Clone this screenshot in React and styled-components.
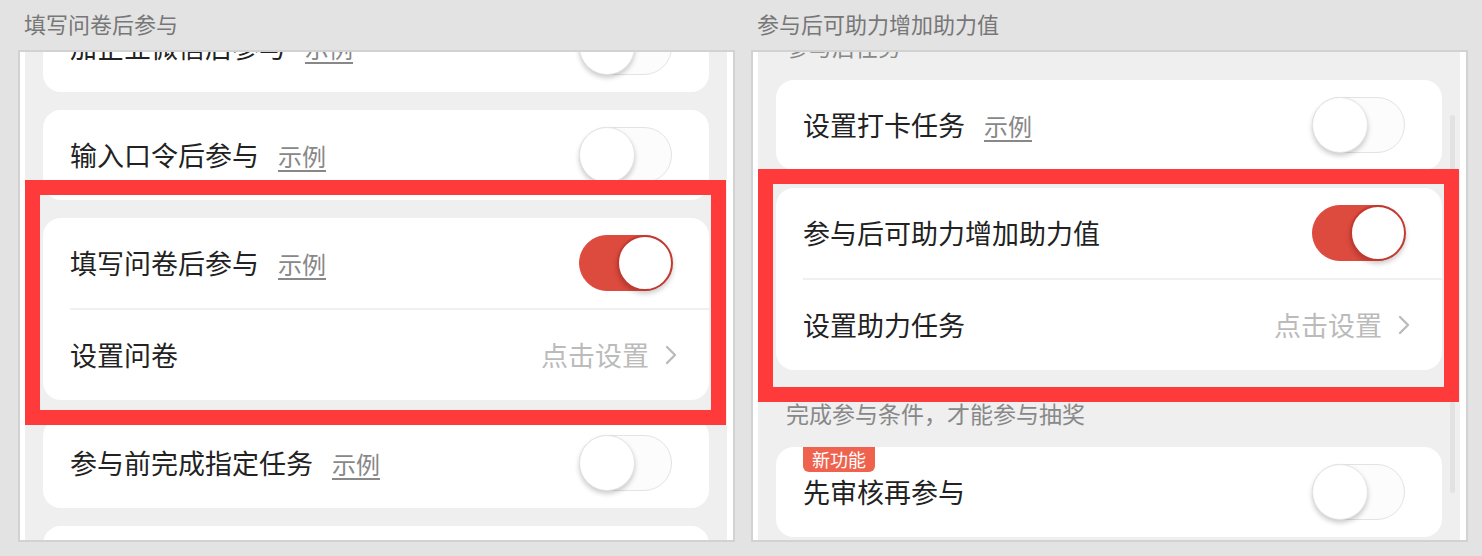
import React from 'react';
import styled, {createGlobalStyle} from "styled-components";

const GlobalStyle = createGlobalStyle`
  html, body {
    margin: 0;
    padding: 0;
    background: #e3e3e3;
    font-family: "Noto Sans CJK SC", "Noto Sans", sans-serif;
  }
`;

const Page = styled.div`
  display: grid;
  grid-template-columns: 717px 717px;
  column-gap: 16px;
  padding: 0 14px 0 18px;
  height: 556px;
  box-sizing: border-box;
  background: #e3e3e3;
`;

const Column = styled.section`
  display: flex;
  flex-direction: column;
`;

const Caption = styled.h2`
  margin: 0;
  height: 50px;
  padding-left: 6px;
  font-size: 22px;
  line-height: 46px;
  font-weight: 400;
  color: #777;
`;

const Phone = styled.div`
  height: 492px;
  box-sizing: border-box;
  border: 2px solid #d2d2d2;
  background: #fff;
  padding: 0 6px 0 5px;
`;

const Viewport = styled.div`
  position: relative;
  height: 100%;
  overflow: hidden;
  background: #efefef;
`;

const Content = styled.div`
  margin-top: ${p => p.$scroll}px;
  padding: 0 18px;
  display: flex;
  flex-direction: column;
`;

const Card = styled.div`
  position: relative;
  flex-shrink: 0;
  margin-top: ${p => p.$space || 0}px;
  background: #fff;
  border-radius: 18px;
`;

const Row = styled.div`
  height: 90px;
  box-sizing: border-box;
  display: flex;
  align-items: center;
  justify-content: space-between;
  padding: 0 ${p => (p.$link ? 31 : 37)}px 0 27px;
`;

const Divider = styled.div`
  height: 2px;
  margin-left: 27px;
  background: #f0f0f0;
`;

const Label = styled.div`
  display: flex;
  align-items: baseline;
  font-size: 27px;
  line-height: 36px;
  color: #222;
`;

const Example = styled.span`
  margin-left: 19px;
  font-size: 24px;
  color: #888;
  text-decoration: underline;
  text-underline-offset: 4px;
  text-decoration-thickness: 2px;
`;

const Action = styled.div`
  display: flex;
  align-items: center;
  gap: 16px;
  font-size: 27px;
  line-height: 36px;
  color: #bbb;
`;

const Switch = styled.span`
  position: relative;
  flex-shrink: 0;
  width: 93px;
  height: 56px;
  box-sizing: border-box;
  border-radius: 28px;
  background: ${p => (p.$on ? '#dd4a3e' : '#fcfcfc')};
  border: 1.5px solid ${p => (p.$on ? '#dd4a3e' : '#e3e3e3')};

  &::after {
    content: '';
    position: absolute;
    top: -1.5px;
    ${p => (p.$on ? 'right: -1.5px;' : 'left: -1.5px;')}
    width: 56px;
    height: 56px;
    box-sizing: border-box;
    border-radius: 50%;
    background: #fff;
    border: ${p => (p.$on ? '2px solid #c23a2f' : '1px solid #e4e4e4')};
    box-shadow: 0 3px 5px rgba(0, 0, 0, 0.2);
  }
`;

const Section = styled.div`
  flex-shrink: 0;
  padding: 28px 0 19px 10px;
  font-size: 23px;
  line-height: 30px;
  color: #888;
`;

const Badge = styled.span`
  position: absolute;
  top: 0;
  left: 27px;
  height: 25px;
  padding: 0 9px;
  border-radius: 0 0 6px 6px;
  background: #ef634e;
  color: #fff;
  font-size: 18px;
  line-height: 25px;
`;

const Highlight = styled.div`
  position: absolute;
  left: 0;
  top: ${p => p.$top}px;
  width: 701px;
  height: ${p => p.$height}px;
  box-sizing: border-box;
  border: 15px solid #ff3a3a;
  pointer-events: none;
`;

const Scrollbar = styled.div`
  position: absolute;
  right: 5px;
  top: 63px;
  width: 5px;
  height: 378px;
  border-radius: 3px;
  background: #e2e2e2;
`;

const Chevron = () => (
    <svg width="13" height="20" viewBox="0 0 13 20">
        <path d="M2 2 L10 10 L2 18" fill="none" stroke="#bbb" strokeWidth="2.4" strokeLinecap="round"
              strokeLinejoin="round"/>
    </svg>
);

const ToggleRow = ({label, example, on}) => (
    <Row>
        <Label>
            {label}
            {example && <Example>示例</Example>}
        </Label>
        <Switch $on={on}/>
    </Row>
);

const LinkRow = ({label}) => (
    <Row $link>
        <Label>{label}</Label>
        <Action>
            点击设置
            <Chevron/>
        </Action>
    </Row>
);

const App = () => {
    return (
        <>
            <GlobalStyle/>
            <Page>
                <Column>
                    <Caption>填写问卷后参与</Caption>
                    <Phone>
                        <Viewport>
                            <Content $scroll={-50}>
                                <Card>
                                    <ToggleRow label="加企业微信后参与" example/>
                                </Card>
                                <Card $space={18}>
                                    <ToggleRow label="输入口令后参与" example/>
                                </Card>
                                <Card $space={18}>
                                    <ToggleRow label="填写问卷后参与" example on/>
                                    <Divider/>
                                    <LinkRow label="设置问卷"/>
                                </Card>
                                <Card $space={18}>
                                    <ToggleRow label="参与前完成指定任务" example/>
                                </Card>
                                <Card $space={18}>
                                    <ToggleRow label="参与后可助力增加助力值"/>
                                </Card>
                            </Content>
                            <Highlight $top={128} $height={245}/>
                        </Viewport>
                    </Phone>
                </Column>
                <Column>
                    <Caption>参与后可助力增加助力值</Caption>
                    <Phone>
                        <Viewport>
                            <Content $scroll={-49}>
                                <Section>参与后任务</Section>
                                <Card>
                                    <ToggleRow label="设置打卡任务" example/>
                                </Card>
                                <Card $space={18}>
                                    <ToggleRow label="参与后可助力增加助力值" on/>
                                    <Divider/>
                                    <LinkRow label="设置助力任务"/>
                                </Card>
                                <Section>完成参与条件，才能参与抽奖</Section>
                                <Card>
                                    <Badge>新功能</Badge>
                                    <ToggleRow label="先审核再参与"/>
                                </Card>
                            </Content>
                            <Scrollbar/>
                            <Highlight $top={117} $height={233}/>
                        </Viewport>
                    </Phone>
                </Column>
            </Page>
        </>
    );
};

export default App;
